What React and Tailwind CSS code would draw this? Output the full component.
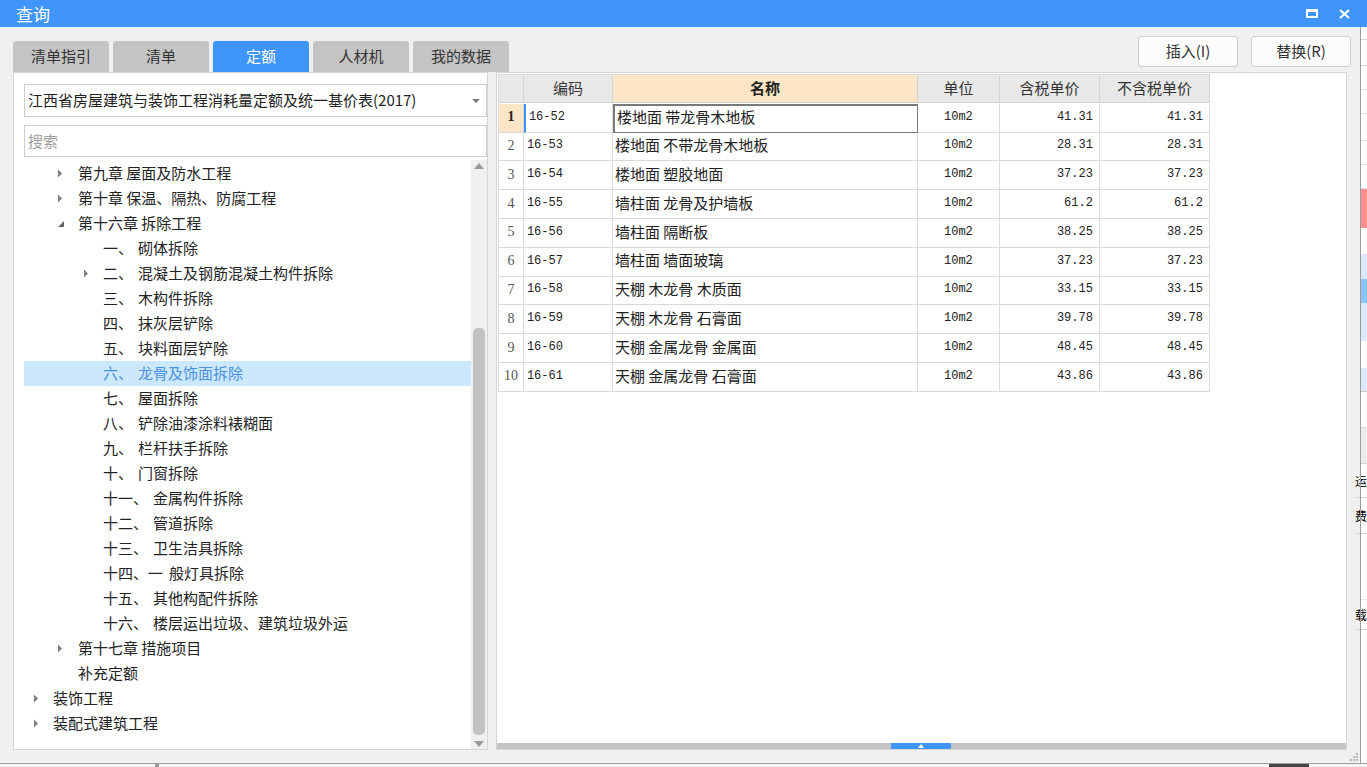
import React from "react";

const cjk = { fontFamily: '"Noto Sans CJK SC", "Noto Sans", sans-serif' };
const mono = { fontFamily: '"Liberation Mono", "Noto Sans CJK SC", monospace' };

const tabs = ["清单指引", "清单", "定额", "人材机", "我的数据"];

// level: 0 top, 1 chapter, 2 section; arrow: null | "right" | "down"
const tree = [
  { level: 1, arrow: "right", text: "第九章 屋面及防水工程" },
  { level: 1, arrow: "right", text: "第十章 保温、隔热、防腐工程" },
  { level: 1, arrow: "down", text: "第十六章 拆除工程" },
  { level: 2, num: "一、", text: "砌体拆除" },
  { level: 2, arrow: "right", num: "二、", text: "混凝土及钢筋混凝土构件拆除" },
  { level: 2, num: "三、", text: "木构件拆除" },
  { level: 2, num: "四、", text: "抹灰层铲除" },
  { level: 2, num: "五、", text: "块料面层铲除" },
  { level: 2, num: "六、", text: "龙骨及饰面拆除", selected: true },
  { level: 2, num: "七、", text: "屋面拆除" },
  { level: 2, num: "八、", text: "铲除油漆涂料裱糊面" },
  { level: 2, num: "九、", text: "栏杆扶手拆除" },
  { level: 2, num: "十、", text: "门窗拆除" },
  { level: 2, num: "十一、", text: "金属构件拆除" },
  { level: 2, num: "十二、", text: "管道拆除" },
  { level: 2, num: "十三、", text: "卫生洁具拆除" },
  { level: 2, num: "十四、一", text: "般灯具拆除", tight: true },
  { level: 2, num: "十五、", text: "其他构配件拆除" },
  { level: 2, num: "十六、", text: "楼层运出垃圾、建筑垃圾外运" },
  { level: 1, arrow: "right", text: "第十七章 措施项目" },
  { level: 1, text: "补充定额" },
  { level: 0, arrow: "right", text: "装饰工程" },
  { level: 0, arrow: "right", text: "装配式建筑工程" },
];

const rows = [
  ["16-52", "楼地面 带龙骨木地板", "41.31"],
  ["16-53", "楼地面 不带龙骨木地板", "28.31"],
  ["16-54", "楼地面 塑胶地面", "37.23"],
  ["16-55", "墙柱面 龙骨及护墙板", "61.2"],
  ["16-56", "墙柱面 隔断板", "38.25"],
  ["16-57", "墙柱面 墙面玻璃", "37.23"],
  ["16-58", "天棚 木龙骨 木质面", "33.15"],
  ["16-59", "天棚 木龙骨 石膏面", "39.78"],
  ["16-60", "天棚 金属龙骨 金属面", "48.45"],
  ["16-61", "天棚 金属龙骨 石膏面", "43.86"],
];

function Arrow({ dir }) {
  if (dir === "down") {
    return (
      <svg width="8" height="8" viewBox="0 0 8 8">
        <path d="M7 1 L7 7 L1 7 Z" fill="#666" />
      </svg>
    );
  }
  return (
    <svg width="6" height="9" viewBox="0 0 6 9">
      <path d="M1 0.5 L5 4.5 L1 8.5 Z" fill="#7e7e7e" />
    </svg>
  );
}

function TreeRow({ item }) {
  const pad = { 0: "pl-[29px]", 1: "pl-[54px]", 2: "pl-[79px]" }[item.level];
  let numWidth = item.num && item.num.length > 2 ? 50 : 35;
  return (
    <div
      className={`relative h-[25px] flex items-center text-[15px] whitespace-pre ${pad} ${
        item.selected ? "bg-[#cce8ff] text-[#4a8fe0]" : "text-[#222]"
      }`}
    >
      {item.arrow && (
        <span className="absolute top-0 h-[25px] flex items-center" style={{ left: { 0: 9, 1: 33, 2: 59 }[item.level] }}>
          <Arrow dir={item.arrow} />
        </span>
      )}
      {item.num ? (
        <>
          {item.tight ? (
            <span className="pr-[6px]">{item.num}</span>
          ) : (
            <span style={{ width: numWidth }}>{item.num}</span>
          )}
          <span>{item.text}</span>
        </>
      ) : (
        <span>{item.text}</span>
      )}
    </div>
  );
}

export default function App() {
  return (
    <div className="w-[1367px] h-[767px] overflow-hidden flex flex-col bg-[#f0f0f0]" style={cjk}>
      {/* title bar */}
      <div className="h-[27px] shrink-0 bg-[#3f95fa] flex items-center justify-between pl-[16px] pr-[17px] text-white">
        <span className="text-[17px] leading-none">查询</span>
        <div className="flex items-center gap-[21px]">
          <div className="w-[12px] h-[9px] border-2 border-t-[3px] border-white" />
          <svg width="11" height="10" viewBox="0 0 11 10">
            <path d="M1 1 L10 9 M10 1 L1 9" stroke="#fff" strokeWidth="2.2" />
          </svg>
        </div>
      </div>

      <div className="flex flex-1">
        {/* dialog body */}
        <div className="w-[1361px] h-[736px] flex flex-col border-r border-[#9c9c9c] relative">
          {/* tabs + buttons */}
          <div className="h-[45px] flex justify-between pl-[13px] pr-[9px]">
            <div className="self-end flex gap-[4px]">
              {tabs.map((t) => (
                <div
                  key={t}
                  className={`w-[96px] h-[31px] rounded-t-[3px] flex items-center justify-center text-[15px] ${
                    t === "定额" ? "bg-[#3e96fb] text-white" : "bg-[#c4c4c4] text-[#333]"
                  }`}
                >
                  {t}
                </div>
              ))}
            </div>
            <div className="flex gap-[13px] mt-[9px]">
              {["插入(I)", "替换(R)"].map((b) => (
                <button
                  key={b}
                  className="w-[100px] h-[31px] bg-[#fcfcfc] border border-[#cfcfcf] rounded-[3px] text-[15px] text-[#333]"
                >
                  {b}
                </button>
              ))}
            </div>
          </div>

          {/* main */}
          <div className="flex gap-[8px] px-[13px] h-[678px]">
            {/* left panel */}
            <div className="w-[476px] bg-white border border-[#d6d6d6] flex flex-col">
              <div className="ml-[10px] mt-[11px] h-[33px] border border-[#cdcdcd] flex items-center justify-between pl-[3px] pr-[6px]">
                <span className="text-[15px] text-[#222]">江西省房屋建筑与装饰工程消耗量定额及统一基价表(2017)</span>
                <svg width="8" height="4" viewBox="0 0 8 4">
                  <path d="M0 0 L8 0 L4 4 Z" fill="#777" />
                </svg>
              </div>
              <div className="ml-[10px] mt-[8px] h-[32px] border border-[#cdcdcd] flex items-center pl-[3px]">
                <span className="text-[15px] text-[#a0a0a0]">搜索</span>
              </div>
              <div className="mt-[3px] flex-1 flex pl-[10px] overflow-hidden">
                <div className="flex-1 pt-[1px]">
                  {tree.map((item, i) => (
                    <TreeRow key={i} item={item} />
                  ))}
                </div>
                <div className="w-[16px] bg-[#f0f0f0] flex flex-col items-center">
                  <svg className="mt-[3px]" width="10" height="6" viewBox="0 0 10 6">
                    <path d="M0 6 L5 0 L10 6 Z" fill="#9a9a9a" />
                  </svg>
                  <div className="mt-[159px] w-[12px] h-[407px] rounded-[5px] bg-[#c2c2c2]" />
                  <svg className="mt-[6px]" width="10" height="6" viewBox="0 0 10 6">
                    <path d="M0 0 L10 0 L5 6 Z" fill="#9a9a9a" />
                  </svg>
                </div>
              </div>
            </div>

            {/* right panel */}
            <div className="w-[853px] bg-white border border-[#d6d6d6] flex flex-col">
              <div className="flex-1 pl-[1px] pt-[1px]">
                <div className="grid grid-cols-[25px_89px_305px_82px_100px_110px] auto-rows-[28.8px] w-max border-l border-t border-[#dadada]">
                  {["", "编码", "名称", "单位", "含税单价", "不含税单价"].map((h, i) => (
                    <div
                      key={i}
                      className={`h-[28px] flex items-center justify-center text-[15px] border-r border-b border-[#d4d4d4] ${
                        i === 2 ? "bg-[#fde6c6] font-bold text-[#222]" : "bg-[#e8e8e8] text-[#333]"
                      }`}
                    >
                      {h}
                    </div>
                  ))}
                  {rows.map((r, i) => {
                    const first = i === 0;
                    return (
                      <React.Fragment key={r[0]}>
                        <div
                          className={`flex items-center justify-center pb-[2px] text-[14px] border-r border-b border-[#dadada] ${
                            first ? "bg-[#fde6c6] font-bold text-[#222]" : "text-[#555]"
                          }`}
                          style={{ fontFamily: '"Liberation Serif", serif' }}
                        >
                          {i + 1}
                        </div>
                        <div
                          className={`flex items-center pl-[3px] pb-[2px] text-[12px] text-[#222] border-r border-b border-[#dadada] ${
                            first ? "border-l-2 border-l-[#3d8ef0]" : ""
                          }`}
                          style={mono}
                        >
                          {r[0]}
                        </div>
                        <div
                          className={`flex items-center pl-[2px] pb-[2px] text-[15px] text-[#222] border-b border-r ${
                            first ? "border-2 border-[#7a7a7a]" : "border-[#dadada]"
                          }`}
                        >
                          {r[1]}
                        </div>
                        <div className="flex items-center justify-center pb-[2px] text-[12px] text-[#222] border-r border-b border-[#dadada]" style={mono}>
                          10m2
                        </div>
                        <div className="flex items-center justify-end pr-[6px] pb-[2px] text-[12px] text-[#222] border-r border-b border-[#dadada]" style={mono}>
                          {r[2]}
                        </div>
                        <div className="flex items-center justify-end pr-[6px] pb-[2px] text-[12px] text-[#222] border-r border-b border-[#dadada]" style={mono}>
                          {r[2]}
                        </div>
                      </React.Fragment>
                    );
                  })}
                </div>
              </div>
              <div className="h-[6px] bg-[#c4c4c4] flex justify-center">
                <div className="w-[60px] h-[6px] bg-[#3e96fb] flex items-center justify-center">
                  <svg width="6" height="4" viewBox="0 0 6 4">
                    <path d="M0 4 L3 0 L6 4 Z" fill="#fff" />
                  </svg>
                </div>
              </div>
            </div>
          </div>

          {/* resize grip */}
          <div className="absolute right-[2px] bottom-[2px] grid grid-cols-3 gap-[1px]">
            {[0, 0, 1, 0, 1, 1, 1, 1, 1].map((v, i) => (
              <div key={i} className={`w-[2px] h-[2px] ${v ? "bg-[#b8b8b8]" : ""}`} />
            ))}
          </div>
        </div>

        {/* background app sliver */}
        <div className="w-[6px] flex flex-col bg-white">
          <div className="h-[13px] border-b border-[#d8d8d8]" />
          <div className="h-[26px] border-b border-[#d8d8d8]" />
          <div className="h-[24px] border-b border-[#e0e0e0]" />
          <div className="h-[24px] border-b border-[#e0e0e0]" />
          <div className="h-[27px] border-b border-[#e0e0e0]" />
          <div className="h-[24px] border-b border-[#e0e0e0]" />
          <div className="h-[24px] border-b border-[#e0e0e0]" />
          <div className="h-[39px] bg-[#ff8f8f]" />
          <div className="h-[27px] border-b border-[#e0e0e0]" />
          <div className="h-[24px] bg-[#dce9fb]" />
          <div className="h-[24px] bg-[#8ec4f5]" />
          <div className="h-[38px] bg-[#dce9fb]" />
          <div className="h-[27px]" />
          <div className="h-[24px] bg-[#dce9fb] border-b border-[#c8c8c8]" />
          <div className="h-[36px] border-b border-[#d8d8d8]" />
          <div className="h-[36px] bg-[#ececec] border-b border-[#d8d8d8]" />
          <div className="h-[34px] border-b border-[#d8d8d8] text-[12px] leading-[34px] -ml-[6px]">运</div>
          <div className="h-[36px] border-b border-[#d8d8d8] text-[12px] leading-[36px] -ml-[6px]">费</div>
          <div className="h-[66px] border-b border-[#e8e8e8]" />
          <div className="h-[30px] border-b border-[#d8d8d8] text-[12px] leading-[30px] -ml-[6px]">载</div>
          <div className="flex-1" />
        </div>
      </div>

      {/* bottom strip of background */}
      <div className="h-[4px] shrink-0 bg-[#f4f4f4] border-t border-[#9c9c9c] flex">
        <div className="ml-[155px] w-[4px] h-[3px] bg-[#999]" />
        <div className="ml-[1110px] w-[40px] h-[3px] bg-[#444]" />
      </div>
    </div>
  );
}
